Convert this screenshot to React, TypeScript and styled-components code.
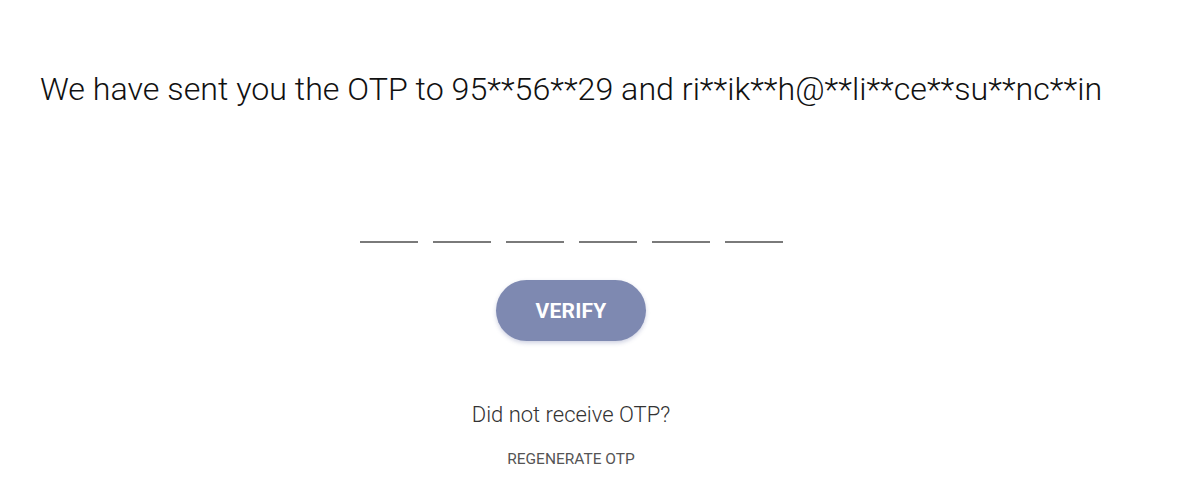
import React from 'react'
import styled, { createGlobalStyle } from 'styled-components'

const GlobalStyle = createGlobalStyle`
  body {
    margin: 0;
    background: #ffffff;
    font-family: Roboto, 'Noto Sans', sans-serif;
  }
`

const Page = styled.div`
  width: 1142px;
  height: 479px;
  display: flex;
  flex-direction: column;
  align-items: center;
`

const Title = styled.h1`
  align-self: flex-start;
  margin: 69px 0 0 40px;
  font-size: 32.2px;
  font-weight: 300;
  color: #111;
  line-height: 40px;
  white-space: nowrap;
`

const OtpRow = styled.div`
  display: flex;
  gap: 15px;
  margin-top: 112px;
`

const OtpInput = styled.input`
  width: 58px;
  height: 20px;
  border: none;
  border-bottom: 2px solid #7a7a7a;
  outline: none;
  background: transparent;
  text-align: center;
  font-family: inherit;
  font-size: 18px;
  padding: 0;
`

const VerifyButton = styled.button`
  margin-top: 37px;
  width: 150px;
  height: 61px;
  border: none;
  border-radius: 31px;
  background: #7e89b1;
  color: #fff;
  font-family: Roboto, sans-serif;
  font-weight: 700;
  font-size: 21px;
  letter-spacing: 0.2px;
  box-shadow: 0 2px 4px rgba(60, 70, 140, 0.25);
  cursor: pointer;
`

const Hint = styled.p`
  margin: 60px 0 0;
  font-size: 22px;
  font-weight: 300;
  color: #333;
  line-height: 28px;
`

const RegenerateLink = styled.button`
  margin-top: 21px;
  border: none;
  background: none;
  padding: 0;
  font-family: Roboto, sans-serif;
  font-size: 15.5px;
  font-weight: 400;
  color: #555;
  cursor: pointer;
`

export default function App() {
  return (
    <Page>
      <GlobalStyle />
      <Title>We have sent you the OTP to 95**56**29 and ri**ik**h@**li**ce**su**nc**in</Title>
      <OtpRow>
        {[0, 1, 2, 3, 4, 5].map((i) => (
          <OtpInput key={i} maxLength={1} />
        ))}
      </OtpRow>
      <VerifyButton>VERIFY</VerifyButton>
      <Hint>Did not receive OTP?</Hint>
      <RegenerateLink>REGENERATE OTP</RegenerateLink>
    </Page>
  )
}
